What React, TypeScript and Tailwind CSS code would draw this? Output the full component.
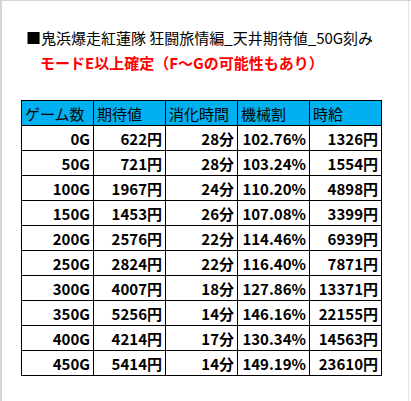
import { FC } from 'react';

type Row = [string, string, string, string, string];

const header: Row = ['ゲーム数', '期待値', '消化時間', '機械割', '時給'];

const rows: Row[] = [
  ['0G', '622円', '28分', '102.76%', '1326円'],
  ['50G', '721円', '28分', '103.24%', '1554円'],
  ['100G', '1967円', '24分', '110.20%', '4898円'],
  ['150G', '1453円', '26分', '107.08%', '3399円'],
  ['200G', '2576円', '22分', '114.46%', '6939円'],
  ['250G', '2824円', '22分', '116.40%', '7871円'],
  ['300G', '4007円', '18分', '127.86%', '13371円'],
  ['350G', '5256円', '14分', '146.16%', '22155円'],
  ['400G', '4214円', '17分', '130.34%', '14563円'],
  ['450G', '5414円', '14分', '149.19%', '23610円'],
];

const font = { fontFamily: '"Noto Sans CJK JP", "Noto Sans", sans-serif' };

const App: FC = function () {
  return (
    <div
      className="h-[401px] w-[411px] overflow-hidden border-l-2 border-t border-[#d6d6d6] bg-white text-black"
      style={font}
    >
      <div className="h-[409px] w-[407px] border-r border-[#e4e4e4]">
        <div className="h-[24px]" />
        <div className="flex h-[25px] items-center pl-[24px] text-[15px] leading-none">
          ■鬼浜爆走紅蓮隊 狂闘旅情編_天井期待値_50G刻み
        </div>
        <div className="flex h-[25px] items-center pl-[38px] text-[15px] font-bold leading-none text-[#ff0000]">
          モードE以上確定（F～Gの可能性もあり）
        </div>
        <div className="h-[25px]" />
        <div className="ml-[19px] w-[361px] border-l border-t border-black">
          <div className="grid grid-cols-[72px_72px_72px_72px_72px] bg-[#00b0f0]">
            {header.map((label) => (
              <div
                key={label}
                className="flex h-[25px] items-center border-b border-r border-black pl-[3px] text-[15px] leading-none"
              >
                {label}
              </div>
            ))}
          </div>
          {rows.map((row) => (
            <div key={row[0]} className="grid grid-cols-[72px_72px_72px_72px_72px]">
              {row.map((cell, i) => (
                <div
                  key={i}
                  className="flex h-[25px] items-center justify-end border-b border-r border-black pr-[3px] text-[15px] font-bold leading-none"
                >
                  {cell}
                </div>
              ))}
            </div>
          ))}
        </div>
      </div>
    </div>
  );
};

export default App;
